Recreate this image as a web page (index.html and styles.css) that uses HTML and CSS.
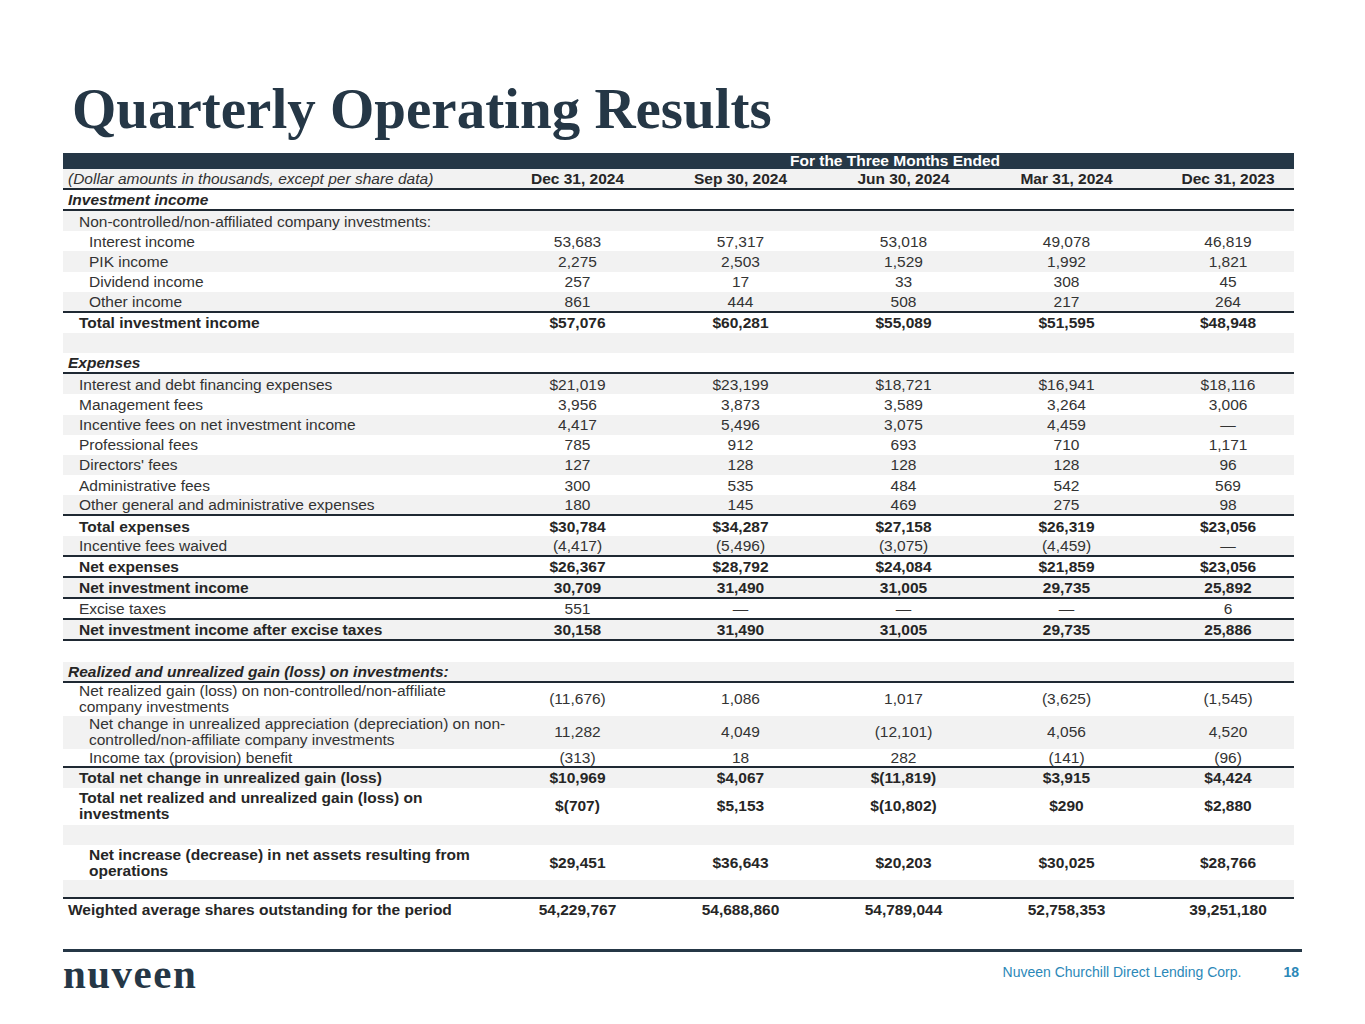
FILE: index.html
```html
<!DOCTYPE html>
<html lang="en">
<head>
<meta charset="utf-8">
<title>Quarterly Operating Results</title>
<link rel="stylesheet" href="styles.css">
</head>
<body>
<div class="page">
  <h1 class="title">Quarterly Operating Results</h1>
  <table class="results">
    <colgroup>
      <col class="c-label"><col class="c-num"><col class="c-num"><col class="c-num"><col class="c-num"><col class="c-last">
    </colgroup>
    <thead>
      <tr class="band"><th></th><th colspan="5">For the Three Months Ended</th></tr>
      <tr class="cols g bb">
        <th class="lbl l0 note">(Dollar amounts in thousands, except per share data)</th>
        <th>Dec 31, 2024</th><th>Sep 30, 2024</th><th>Jun 30, 2024</th><th>Mar 31, 2024</th><th class="last">Dec 31, 2023</th>
      </tr>
    </thead>
    <tbody>
      <tr class="bb"><td class="lbl l0 sec">Investment income</td><td></td><td></td><td></td><td></td><td class="last"></td></tr>
      <tr class="g"><td class="lbl l1">Non-controlled/non-affiliated company investments:</td><td></td><td></td><td></td><td></td><td class="last"></td></tr>
      <tr><td class="lbl l2">Interest income</td><td>53,683</td><td>57,317</td><td>53,018</td><td>49,078</td><td class="last">46,819</td></tr>
      <tr class="g"><td class="lbl l2">PIK income</td><td>2,275</td><td>2,503</td><td>1,529</td><td>1,992</td><td class="last">1,821</td></tr>
      <tr><td class="lbl l2">Dividend income</td><td>257</td><td>17</td><td>33</td><td>308</td><td class="last">45</td></tr>
      <tr class="g bb"><td class="lbl l2">Other income</td><td>861</td><td>444</td><td>508</td><td>217</td><td class="last">264</td></tr>
      <tr class="b"><td class="lbl l1">Total investment income</td><td>$57,076</td><td>$60,281</td><td>$55,089</td><td>$51,595</td><td class="last">$48,948</td></tr>
      <tr class="g"><td class="lbl"></td><td></td><td></td><td></td><td></td><td class="last"></td></tr>
      <tr class="bb"><td class="lbl l0 sec">Expenses</td><td></td><td></td><td></td><td></td><td class="last"></td></tr>
      <tr class="g"><td class="lbl l1">Interest and debt financing expenses</td><td>$21,019</td><td>$23,199</td><td>$18,721</td><td>$16,941</td><td class="last">$18,116</td></tr>
      <tr><td class="lbl l1">Management fees</td><td>3,956</td><td>3,873</td><td>3,589</td><td>3,264</td><td class="last">3,006</td></tr>
      <tr class="g"><td class="lbl l1">Incentive fees on net investment income</td><td>4,417</td><td>5,496</td><td>3,075</td><td>4,459</td><td class="last">—</td></tr>
      <tr><td class="lbl l1">Professional fees</td><td>785</td><td>912</td><td>693</td><td>710</td><td class="last">1,171</td></tr>
      <tr class="g"><td class="lbl l1">Directors' fees</td><td>127</td><td>128</td><td>128</td><td>128</td><td class="last">96</td></tr>
      <tr><td class="lbl l1">Administrative fees</td><td>300</td><td>535</td><td>484</td><td>542</td><td class="last">569</td></tr>
      <tr class="g bb"><td class="lbl l1">Other general and administrative expenses</td><td>180</td><td>145</td><td>469</td><td>275</td><td class="last">98</td></tr>
      <tr class="b"><td class="lbl l1">Total expenses</td><td>$30,784</td><td>$34,287</td><td>$27,158</td><td>$26,319</td><td class="last">$23,056</td></tr>
      <tr class="g bb"><td class="lbl l1">Incentive fees waived</td><td>(4,417)</td><td>(5,496)</td><td>(3,075)</td><td>(4,459)</td><td class="last">—</td></tr>
      <tr class="b bb"><td class="lbl l1">Net expenses</td><td>$26,367</td><td>$28,792</td><td>$24,084</td><td>$21,859</td><td class="last">$23,056</td></tr>
      <tr class="g b bb"><td class="lbl l1">Net investment income</td><td>30,709</td><td>31,490</td><td>31,005</td><td>29,735</td><td class="last">25,892</td></tr>
      <tr class="bb"><td class="lbl l1">Excise taxes</td><td>551</td><td>—</td><td>—</td><td>—</td><td class="last">6</td></tr>
      <tr class="g b bb"><td class="lbl l1">Net investment income after excise taxes</td><td>30,158</td><td>31,490</td><td>31,005</td><td>29,735</td><td class="last">25,886</td></tr>
      <tr><td class="lbl"></td><td></td><td></td><td></td><td></td><td class="last"></td></tr>
      <tr class="g bb"><td class="lbl l0 sec">Realized and unrealized gain (loss) on investments:</td><td></td><td></td><td></td><td></td><td class="last"></td></tr>
      <tr class="two"><td class="lbl l1">Net realized gain (loss) on non-controlled/non-affiliate<br>company investments</td><td>(11,676)</td><td>1,086</td><td>1,017</td><td>(3,625)</td><td class="last">(1,545)</td></tr>
      <tr class="g two"><td class="lbl l2">Net change in unrealized appreciation (depreciation) on non-<br>controlled/non-affiliate company investments</td><td>11,282</td><td>4,049</td><td>(12,101)</td><td>4,056</td><td class="last">4,520</td></tr>
      <tr class="bb tight"><td class="lbl l2">Income tax (provision) benefit</td><td>(313)</td><td>18</td><td>282</td><td>(141)</td><td class="last">(96)</td></tr>
      <tr class="g b"><td class="lbl l1">Total net change in unrealized gain (loss)</td><td>$10,969</td><td>$4,067</td><td>$(11,819)</td><td>$3,915</td><td class="last">$4,424</td></tr>
      <tr class="b two tall"><td class="lbl l1">Total net realized and unrealized gain (loss) on<br>investments</td><td>$(707)</td><td>$5,153</td><td>$(10,802)</td><td>$290</td><td class="last">$2,880</td></tr>
      <tr class="g"><td class="lbl"></td><td></td><td></td><td></td><td></td><td class="last"></td></tr>
      <tr class="b two mid"><td class="lbl l2">Net increase (decrease) in net assets resulting from<br>operations</td><td>$29,451</td><td>$36,643</td><td>$20,203</td><td>$30,025</td><td class="last">$28,766</td></tr>
      <tr class="g bb short"><td class="lbl"></td><td></td><td></td><td></td><td></td><td class="last"></td></tr>
      <tr class="b"><td class="lbl l0">Weighted average shares outstanding for the period</td><td>54,229,767</td><td>54,688,860</td><td>54,789,044</td><td>52,758,353</td><td class="last">39,251,180</td></tr>
    </tbody>
  </table>
  <footer class="footer">
    <div class="logo">nuveen</div>
    <div class="foot-right">
      <span class="corp">Nuveen Churchill Direct Lending Corp.</span>
      <span class="pageno">18</span>
    </div>
  </footer>
</div>
</body>
</html>
```
FILE: styles.css
```css
html, body {
  margin: 0;
  padding: 0;
  background: #ffffff;
}

.page {
  width: 1365px;
  height: 1024px;
  position: relative;
  font-family: "Liberation Sans", Arial, sans-serif;
  color: #333333;
}

.title {
  margin: 0;
  padding: 77px 0 0 72px;
  font-family: "Liberation Serif", "Times New Roman", serif;
  font-weight: bold;
  font-size: 57px;
  line-height: 64px;
  color: #253746;
  height: 64px;
}

.results {
  margin: 12px 0 0 63px;
  width: 1231px;
  border-collapse: collapse;
  table-layout: fixed;
  font-size: 15.5px;
  line-height: 17px;
}

.c-label { width: 433px; }
.c-num { width: 163px; }
.c-last { width: 146px; }

.results th,
.results td {
  padding: 0;
  height: 20.2px;
  text-align: center;
  vertical-align: middle;
  white-space: nowrap;
}

.results .last { padding-left: 14px; }

.results .lbl { text-align: left; }
.results .l0 { padding-left: 5px; }
.results .l1 { padding-left: 16px; }
.results .l2 { padding-left: 26px; }

.band th {
  background: #253746;
  color: #ffffff;
  font-weight: bold;
  height: 16px;
  line-height: 16px;
  padding-left: 0;
}

.cols th {
  font-weight: bold;
  color: #262626;
  height: 19px;
}
.cols th.note {
  font-weight: normal;
  font-style: italic;
  color: #333333;
}

.g td, .g th { background: #f2f2f2; }

.bb td, .bb th {
  border-bottom: 2px solid #1f2933;
  height: 19px;
}

.b td { font-weight: bold; color: #262626; }

.sec { font-weight: bold; font-style: italic; color: #262626; }

.two td { height: 33px; line-height: 16px; }
.two.tall td { height: 37px; }
.two.mid td { height: 35px; }
.short td { height: 17px; }
.tight td { height: 17px; }

.footer {
  position: absolute;
  left: 63px;
  top: 949px;
  width: 1239px;
  border-top: 3px solid #253746;
  display: flex;
  justify-content: space-between;
  align-items: flex-start;
}

.logo {
  font-family: "Liberation Serif", "Times New Roman", serif;
  font-weight: bold;
  font-size: 41px;
  line-height: 36px;
  letter-spacing: 1.5px;
  color: #253746;
  margin-top: 4px;
}

.foot-right {
  display: flex;
  gap: 42px;
  margin-top: 12px;
  margin-right: 3px;
  font-size: 14px;
  line-height: 16px;
  color: #2b88b8;
}

.pageno { font-weight: bold; }
```
